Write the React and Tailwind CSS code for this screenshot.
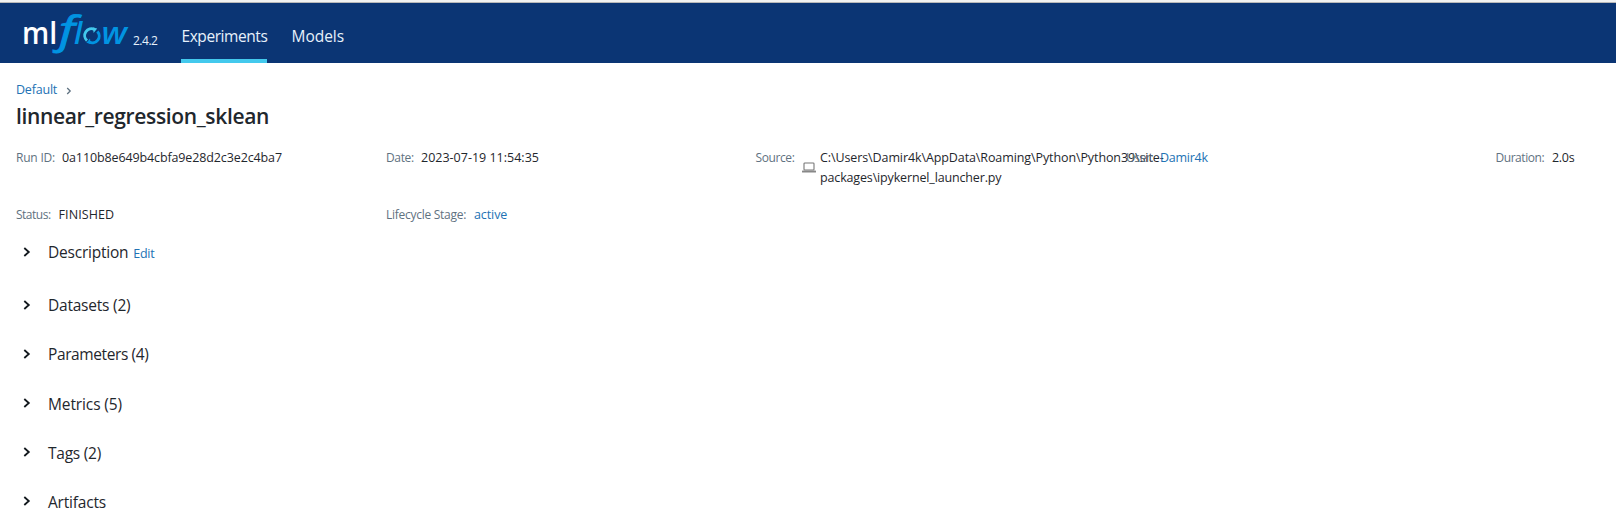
const sections = [
  { title: "Datasets (2)", row: "h-[49px]", chevron: "mt-[5px]", tracking: "tracking-[-0.22px]" },
  { title: "Parameters (4)", row: "h-[50px]", chevron: "mt-[5px]", tracking: "tracking-[-0.4px]" },
  { title: "Metrics (5)", row: "h-[49px]", chevron: "mt-1", tracking: "tracking-[-0.11px]" },
  { title: "Tags (2)", row: "h-[49px]", chevron: "mt-1", tracking: "tracking-[-0.25px]" },
  { title: "Artifacts", row: "h-[30px]", chevron: "mt-1", tracking: "tracking-[-0.2px]" },
];

function Logo() {
  return (
    <svg width="111" height="60" viewBox="22 3 111 60" className="block" fontFamily="'Open Sans', sans-serif">
      <text x="22" y="44" fontSize="30" fontWeight="600" fill="#fff" textLength="35.2" lengthAdjust="spacingAndGlyphs">ml</text>
      <g fill="#0194e2" fontStyle="italic" fontWeight="600">
        <text x="59" y="43.5" fontSize="39" fontWeight="400" stroke="#0194e2" strokeWidth="0.9" textLength="16" lengthAdjust="spacingAndGlyphs">f</text>
        <text x="74" y="44" fontSize="30">l</text>
        <text x="101.5" y="44" fontSize="30.5" textLength="25.5" lengthAdjust="spacingAndGlyphs">w</text>
      </g>
      <g fill="none" strokeWidth="2.9">
        <path d="M87 40.6A6.8 6.8 0 0 1 94.5 29.4" stroke="#43c9ed" />
        <path d="M97.4 31.4A6.8 6.8 0 0 1 89.2 42" stroke="#0194e2" />
      </g>
      <path d="M93 27.4l4.2 1-3.6 4.6z" fill="#43c9ed" />
      <path d="M90.6 44l-4.2-1.2 3.6-4.4z" fill="#0194e2" />
    </svg>
  );
}

function Chevron({ className }) {
  return (
    <svg width="8" height="10" viewBox="0 0 8 10" className={`ml-[7px] shrink-0 ${className}`}>
      <path d="M1.3 1L5.8 5 1.3 9" fill="none" stroke="#11171c" strokeWidth="1.8" />
    </svg>
  );
}

function Meta({ label, labelClass, children }) {
  return (
    <div className="flex min-w-0 items-baseline whitespace-nowrap">
      <span className={`shrink-0 text-[12px] text-[#5f7281] ${labelClass}`}>{label}</span>
      {children}
    </div>
  );
}

export default function App() {
  return (
    <div className="h-[531px] w-[1616px] overflow-hidden bg-white text-[#1f272d] [font-family:'Open_Sans','Noto_Sans',sans-serif]">
      <div className="h-[3px] border-b border-[#b9b9b9] bg-[#f2f2f2]" />
      <header className="flex h-[60px] bg-[#0b3574] pl-[22px] text-[#e7f1fb]">
        <Logo />
        <span className="w-12 pt-[28px] text-[12px] leading-5 tracking-[-0.5px]">2.4.2</span>
        <nav className="flex text-[15.5px] leading-5">
          <a className="h-[60px] w-[86px] border-b-4 border-[#43c9ed] pt-[23px] pl-[0.5px] tracking-[-0.43px]">Experiments</a>
          <a className="ml-6 pt-[23px] pl-[0.5px] tracking-[-0.03px]">Models</a>
        </nav>
      </header>

      <main className="pt-[17px] pl-4">
        <div className="flex h-[22px] items-start text-[12.5px] leading-5 tracking-[-0.2px] text-[#2272b4]">
          <span>Default</span>
          <svg width="6" height="8" viewBox="0 0 6 8" className="mt-[7px] ml-[9px]">
            <path d="M1.2 1l3 3-3 3" fill="none" stroke="#5f7281" strokeWidth="1.3" />
          </svg>
        </div>
        <h1 className="h-[46px] text-[21px] leading-7 font-semibold tracking-[-0.35px]">linnear_regression_sklean</h1>

        <div className="grid h-[94px] grid-cols-[370px_370px_370px_370px_120px] grid-rows-[40px_20px] gap-y-[17px] text-[12.5px] leading-5">
          <Meta label="Run ID:" labelClass="w-[46px] tracking-[-0.2px]">
            <span className="tracking-[-0.12px]">0a110b8e649b4cbfa9e28d2c3e2c4ba7</span>
          </Meta>
          <Meta label="Date:" labelClass="w-[35px] tracking-[-0.35px]">
            <span>2023-07-19 11:54:35</span>
          </Meta>
          <Meta label="Source:" labelClass="w-[46px] -ml-[0.5px] mr-[0.5px] tracking-[-0.4px]">
            <svg width="14" height="11" viewBox="0 0 14 11" className="mt-[14px] mr-1 shrink-0 self-start">
              <rect x="2" y="1" width="10" height="7" rx="0.8" fill="#fff" stroke="#777" strokeWidth="1.1" />
              <rect x="0" y="8.6" width="14" height="1.9" rx="0.6" fill="#888" />
            </svg>
            <span>
              <span className="block tracking-[-0.1px]">C:\Users\Damir4k\AppData\Roaming\Python\Python39\site-</span>
              <span className="block tracking-[-0.15px]">packages\ipykernel_launcher.py</span>
            </span>
          </Meta>
          <Meta label="User:" labelClass="w-[34px] tracking-[-0.4px]">
            <span className="tracking-[-0.25px] text-[#2272b4]">Damir4k</span>
          </Meta>
          <Meta label="Duration:" labelClass="w-[56px] -ml-[0.5px] mr-[0.5px] tracking-[-0.45px]">
            <span className="tracking-[-0.3px]">2.0s</span>
          </Meta>
          <Meta label="Status:" labelClass="w-[42px] tracking-[-0.5px]">
            <span className="ml-[0.5px] tracking-[0.1px]">FINISHED</span>
          </Meta>
          <Meta label="Lifecycle Stage:" labelClass="w-[88px] tracking-[-0.27px]">
            <span className="tracking-[-0.1px] text-[#2272b4]">active</span>
          </Meta>
        </div>

        <div className="text-[15.5px] leading-5">
          <div className="flex h-[53px] items-start">
            <Chevron className="mt-[5px]" />
            <span className="ml-[17px] tracking-[-0.22px]">Description</span>
            <a className="ml-[5px] pt-[2px] text-[12.5px] tracking-[-0.3px] text-[#2272b4]">Edit</a>
          </div>
          {sections.map((s) => (
            <div key={s.title} className={`flex items-start ${s.row}`}>
              <Chevron className={s.chevron} />
              <span className={`ml-[17px] ${s.tracking}`}>{s.title}</span>
            </div>
          ))}
        </div>
      </main>
    </div>
  );
}
